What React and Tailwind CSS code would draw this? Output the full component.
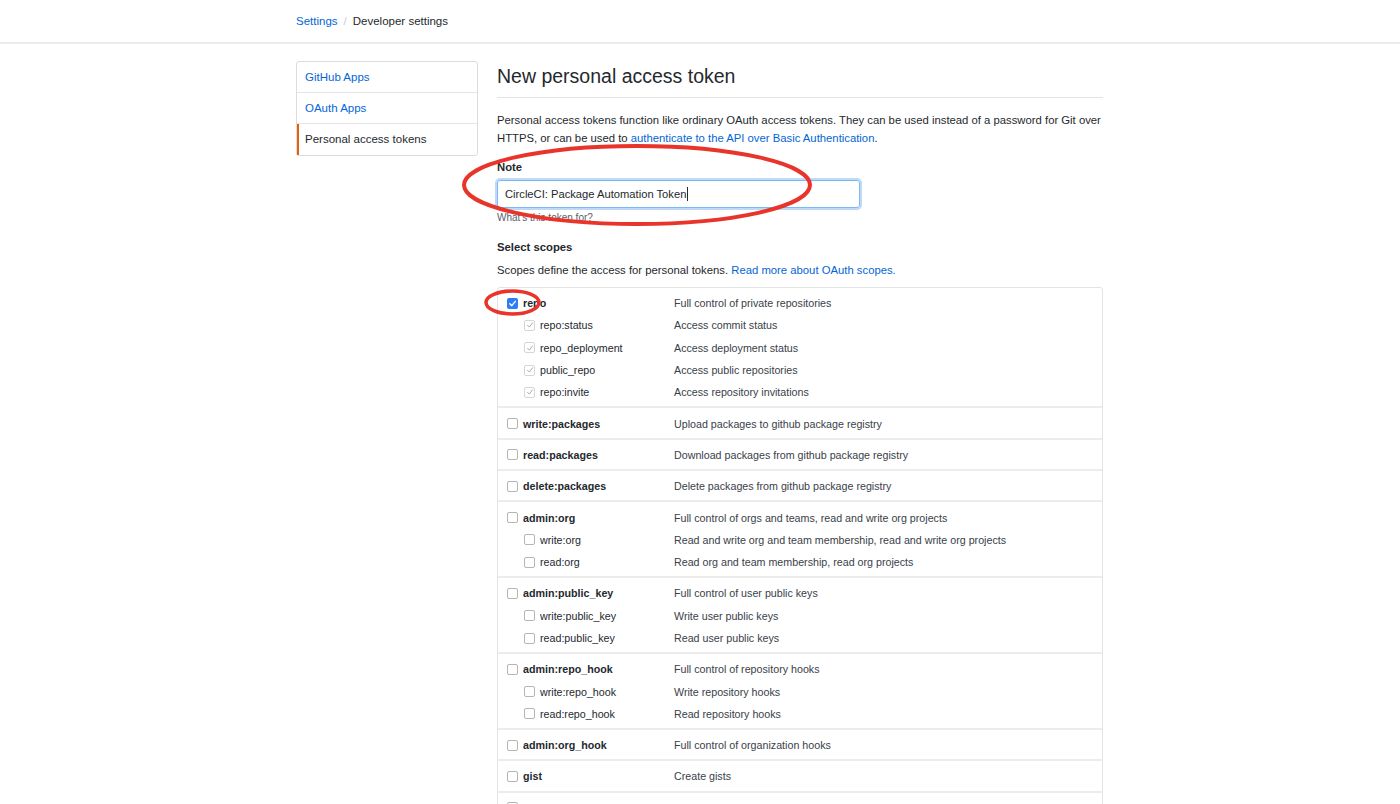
import React from "react";

const scopeGroups = [
  {
    name: "repo",
    desc: "Full control of private repositories",
    checked: true,
    children: [
      ["repo:status", "Access commit status"],
      ["repo_deployment", "Access deployment status"],
      ["public_repo", "Access public repositories"],
      ["repo:invite", "Access repository invitations"],
    ],
  },
  { name: "write:packages", desc: "Upload packages to github package registry" },
  { name: "read:packages", desc: "Download packages from github package registry" },
  { name: "delete:packages", desc: "Delete packages from github package registry" },
  {
    name: "admin:org",
    desc: "Full control of orgs and teams, read and write org projects",
    children: [
      ["write:org", "Read and write org and team membership, read and write org projects"],
      ["read:org", "Read org and team membership, read org projects"],
    ],
  },
  {
    name: "admin:public_key",
    desc: "Full control of user public keys",
    children: [
      ["write:public_key", "Write user public keys"],
      ["read:public_key", "Read user public keys"],
    ],
  },
  {
    name: "admin:repo_hook",
    desc: "Full control of repository hooks",
    children: [
      ["write:repo_hook", "Write repository hooks"],
      ["read:repo_hook", "Read repository hooks"],
    ],
  },
  { name: "admin:org_hook", desc: "Full control of organization hooks" },
  { name: "gist", desc: "Create gists" },
  { name: "notifications", desc: "Access notifications" },
];

function Checkbox({ state }) {
  // state: "on" | "disabled" | "off"
  if (state === "on") {
    return (
      <span className="w-[11px] h-[11px] rounded-[2px] bg-[#2e7cf6] flex items-center justify-center shrink-0">
        <svg width="9" height="9" viewBox="0 0 10 10">
          <path d="M2 5.2 L4.2 7.4 L8.2 2.6" fill="none" stroke="white" strokeWidth="1.6" strokeLinecap="round" strokeLinejoin="round" />
        </svg>
      </span>
    );
  }
  if (state === "disabled") {
    return (
      <span className="w-[11px] h-[11px] rounded-[2px] border border-[#d6d6d6] bg-white flex items-center justify-center shrink-0">
        <svg width="8" height="8" viewBox="0 0 10 10">
          <path d="M2 5.4 L4.2 7.6 L8.2 2.2" fill="none" stroke="#a8a8a8" strokeWidth="1.2" strokeLinecap="round" strokeLinejoin="round" />
        </svg>
      </span>
    );
  }
  return <span className="w-[11px] h-[11px] rounded-[2px] border border-[#b5b5b5] bg-white shrink-0" />;
}

export default function App() {
  return (
    <div
      className="relative min-h-screen bg-white text-[#24292e]"
      style={{ fontFamily: '"Liberation Sans", Arial, sans-serif' }}
    >
      {/* breadcrumb header */}
      <div className="h-[44px] border-b-2 border-[#ececec]">
        <div className="w-[808px] mx-auto h-full flex items-center text-[11.5px] pt-[2px]">
          <a className="text-[#0366d6]">Settings</a>
          <span className="mx-[6px] text-[#c6cbd1]">/</span>
          <span className="text-[#24292e]">Developer settings</span>
        </div>
      </div>

      <div className="w-[808px] mx-auto pt-[17px] flex gap-[19px]">
        {/* sidebar */}
        <div className="w-[182px] shrink-0 self-start border border-[#dcdcdc] rounded-[3px] text-[11.5px]">
          <div className="h-[31px] flex items-center px-[8px] pt-[1px] border-b border-[#e4e4e4] text-[#0366d6]">GitHub Apps</div>
          <div className="h-[31px] flex items-center px-[8px] pt-[1px] border-b border-[#e4e4e4] text-[#0366d6]">OAuth Apps</div>
          <div className="h-[31px] flex items-center px-[6px] pt-[1px] border-l-2 border-[#e36209] text-[#24292e]">Personal access tokens</div>
        </div>

        {/* main */}
        <div className="w-[606px]">
          <h1 className="text-[19.5px] leading-[30px] font-normal pb-[6px] border-b border-[#e1e4e8]">
            New personal access token
          </h1>
          <p className="mt-[13px] text-[11.3px] leading-[18px]">
            Personal access tokens function like ordinary OAuth access tokens. They can be used instead of a password for Git over
            HTTPS, or can be used to <a className="text-[#0366d6]">authenticate to the API over Basic Authentication</a>.
          </p>

          <div className="mt-[11px] text-[11.3px] leading-[18px] font-bold">Note</div>
          <div className="mt-[4px] w-[363px] h-[28px] border border-[#79b8ff] rounded-[3px] shadow-[0_0_0_2px_rgba(3,102,214,0.25)] flex items-center px-[7px] text-[11.2px]">
            CircleCI: Package Automation Token<span className="w-px h-[14px] bg-[#24292e] ml-px" />
          </div>
          <div className="mt-[3px] text-[10px] leading-[14px] text-[#586069]">What's this token for?</div>

          <div className="mt-[13px] text-[11.3px] leading-[18px] font-bold">Select scopes</div>
          <p className="mt-[5px] text-[11.3px] leading-[18px]">
            Scopes define the access for personal tokens. <a className="text-[#0366d6]">Read more about OAuth scopes.</a>
          </p>

          <div className="mt-[8px] border border-[#e4e4e4] rounded-[3px] text-[10.7px]">
            {scopeGroups.map((g, i) => (
              <div key={g.name} className={`pt-[4px] pb-[3px] pl-[9px] ${i > 0 ? "border-t-2 border-[#ececec]" : ""}`}>
                <div className="h-[22.3px] flex items-center">
                  <div className="w-[167px] flex items-center gap-[5px] font-bold">
                    <Checkbox state={g.checked ? "on" : "off"} />
                    <span>{g.name}</span>
                  </div>
                  <span className="text-[#3a4149]">{g.desc}</span>
                </div>
                {g.children?.map(([n, d]) => (
                  <div key={n} className="h-[22.3px] flex items-center">
                    <div className="w-[167px] flex items-center gap-[5px] pl-[17px]">
                      <Checkbox state={g.checked ? "disabled" : "off"} />
                      <span>{n}</span>
                    </div>
                    <span className="text-[#3a4149]">{d}</span>
                  </div>
                ))}
              </div>
            ))}
          </div>
        </div>
      </div>

      {/* red annotation ellipses */}
      <svg className="absolute left-0 top-0 pointer-events-none" width="1400" height="804">
        <ellipse cx="637" cy="185" rx="173" ry="39" fill="none" stroke="#e8342a" strokeWidth="4" />
        <ellipse cx="512.5" cy="302.5" rx="26.5" ry="11.5" fill="none" stroke="#e8342a" strokeWidth="3.5" />
      </svg>
    </div>
  );
}
